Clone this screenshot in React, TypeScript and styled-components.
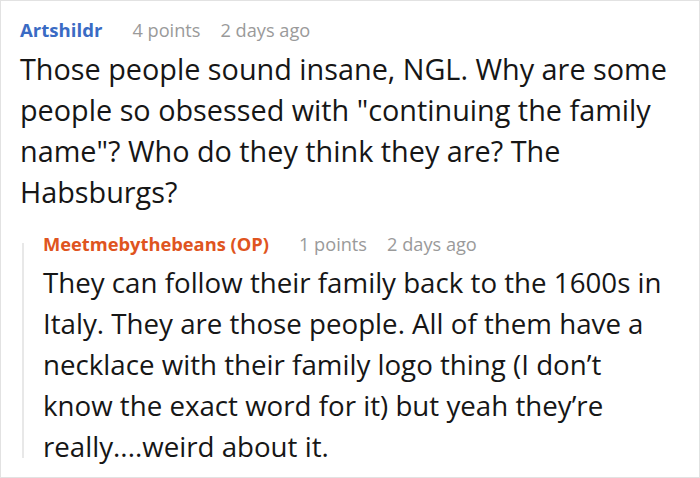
import React from "react";
import styled, { createGlobalStyle } from "styled-components";

const Global = createGlobalStyle`
  html, body { margin: 0; padding: 0; background: #fff; }
  * { box-sizing: border-box; }
`;

const Frame = styled.div`
  width: 700px;
  height: 478px;
  border: 1px solid #e2e2e2;
  background: #fff;
  font-family: "Open Sans", "Noto Sans", sans-serif;
  padding: 16px 18px 0 19px;
  overflow: hidden;
`;

const Header = styled.div`
  display: flex;
  align-items: baseline;
  height: 26px;
  line-height: 26px;
`;

const Author = styled.span<{ $op?: boolean }>`
  font-weight: 700;
  font-size: ${(p) => (p.$op ? "18.3px" : "18.6px")};
  margin-right: 30px;
  color: ${(p) => (p.$op ? "#df5420" : "#3a6bc4")};
`;

const Meta = styled.span`
  font-size: 18.2px;
  color: #9a9a9a;
  margin-right: 20px;
`;

const Body = styled.p<{ $reply?: boolean }>`
  margin: 5px ${(p) => (p.$reply ? "6px" : "0")} 0 0;
  font-size: ${(p) => (p.$reply ? "27.7px" : "28.8px")};
  line-height: 41px;
  color: #161616;
`;

const Reply = styled.div`
  position: relative;
  margin-top: 19px;
  padding-left: 23px;
  &::before {
    content: "";
    position: absolute;
    left: 2px;
    top: 12px;
    bottom: 9px;
    width: 2px;
    background: #e8e8e8;
  }
`;

export default function App() {
  return (
    <>
      <Global />
      <Frame>
        <Header>
          <Author>Artshildr</Author>
          <Meta>4 points</Meta>
          <Meta>2 days ago</Meta>
        </Header>
        <Body>
          Those people sound insane, NGL. Why are some people so obsessed with
          "continuing the family name"? Who do they think they are? The
          Habsburgs?
        </Body>
        <Reply>
          <Header>
            <Author $op>Meetmebythebeans (OP)</Author>
            <Meta>1 points</Meta>
            <Meta>2 days ago</Meta>
          </Header>
          <Body $reply>
            They can follow their family back to the 1600s in Italy. They are
            those people. All of them have a necklace with their family logo
            thing (I don’t know the exact word for it) but yeah they’re
            really....weird about it.
          </Body>
        </Reply>
      </Frame>
    </>
  );
}
